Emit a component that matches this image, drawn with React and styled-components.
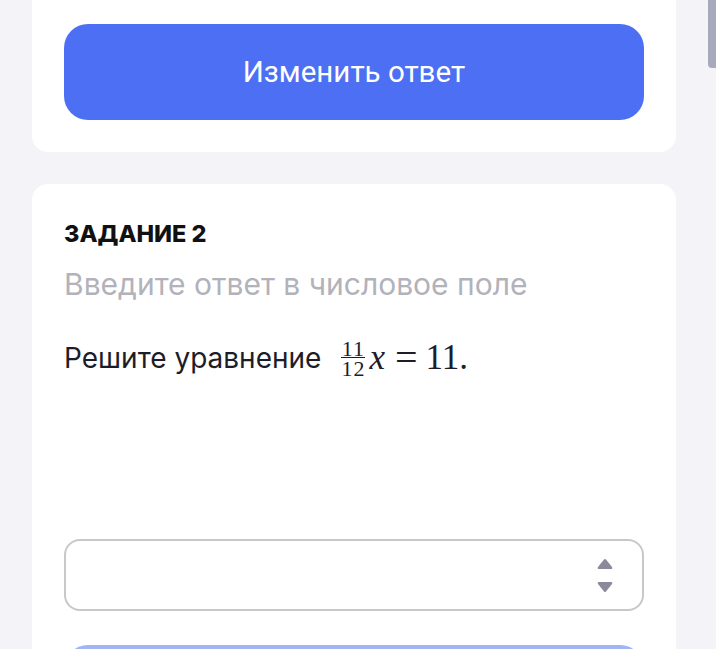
import React from "react";
import styled, { createGlobalStyle } from "styled-components";

const Global = createGlobalStyle`
    html, body {
        margin: 0;
        padding: 0;
        background: #f3f3f8;
        overflow: hidden;
    }
    * { box-sizing: border-box; }
`

const Page = styled.div`
    width: 716px;
    height: 649px;
    overflow: hidden;
    padding: 0 40px 0 32px;
    display: flex;
    flex-direction: column;
    gap: 32px;
    font-family: Inter, "Noto Sans", sans-serif;
`

const Card = styled.div`
    width: 644px;
    flex-shrink: 0;
    background: #fff;
    border-radius: ${p => (p.top ? "0 0 16px 16px" : "16px")};
    padding: ${p => (p.top ? "24px 32px 32px" : "32px")};
    display: flex;
    flex-direction: column;
`

const Button = styled.button`
    height: 96px;
    width: 100%;
    border: none;
    border-radius: 24px;
    background: ${p => (p.disabled ? "#a3b4f6" : "#4c6ff4")};
    color: #fff;
    font-family: Roboto, sans-serif;
    font-size: 29.5px;
    flex-shrink: 0;
`

const Label = styled.div`
    font-size: 23.5px;
    font-weight: 800;
    line-height: 36px;
    color: #111;
`

const Hint = styled.div`
    margin-top: 14px;
    font-size: 30px;
    line-height: 36px;
    color: #b2b2ba;
`

const Task = styled.div`
    margin-top: 38px;
    min-height: 199px;
    display: flex;
    align-items: flex-start;
    font-size: 28px;
    line-height: 36px;
    color: #1d1d29;
`

const Math = styled.span`
    margin-left: 20px;
    display: inline-flex;
    align-items: center;
    font-family: "Liberation Serif", serif;
    font-size: 35px;
    height: 36px;
`

const Frac = styled.span`
    display: inline-flex;
    flex-direction: column;
    align-items: center;
    font-size: 22px;
    line-height: 17px;
    letter-spacing: 1px;
    margin-right: 4px;
    span + span {
        border-top: 1.5px solid #1d1d29;
        padding-top: 2px;
    }
`

const Var = styled.i`
    margin-right: 10px;
`

const Eq = styled.span`
    margin-right: 8px;
    font-size: 40px;
`

const Field = styled.div`
    height: 72px;
    flex-shrink: 0;
    border: 2px solid #c8c8cb;
    border-radius: 16px;
    display: flex;
    align-items: center;
    justify-content: flex-end;
    padding-right: 29px;
`

const Spin = styled.div`
    display: flex;
    flex-direction: column;
    gap: 11px;
`

const Gap = styled.div`
    height: 34px;
    flex-shrink: 0;
`

const Thumb = styled.div`
    position: fixed;
    top: 0;
    right: 0;
    width: 8px;
    height: 68px;
    background: #a7aabd;
    border-radius: 0 0 0 4px;
`

const Arrow = ({ down }) => (
    <svg width="16" height="12" viewBox="0 0 16 12">
        <path
            d={down ? "M2 1 H14 Q16 1 15 3 L9 10.5 Q8 11.5 7 10.5 L1 3 Q0 1 2 1 Z" : "M2 11 H14 Q16 11 15 9 L9 1.5 Q8 0.5 7 1.5 L1 9 Q0 11 2 11 Z"}
            fill="#8a8a9b"
        />
    </svg>
)

const App = () => {
    return (
        <Page>
            <Global />
            <Card top>
                <Button>Изменить ответ</Button>
            </Card>
            <Card>
                <Label>ЗАДАНИЕ 2</Label>
                <Hint>Введите ответ в числовое поле</Hint>
                <Task>
                    Решите уравнение
                    <Math>
                        <Frac>
                            <span>11</span>
                            <span>12</span>
                        </Frac>
                        <Var>x</Var>
                        <Eq>=</Eq>
                        11.
                    </Math>
                </Task>
                <Field>
                    <Spin>
                        <Arrow />
                        <Arrow down />
                    </Spin>
                </Field>
                <Gap />
                <Button disabled />
            </Card>
            <Thumb />
        </Page>
    )
}

export default App;
